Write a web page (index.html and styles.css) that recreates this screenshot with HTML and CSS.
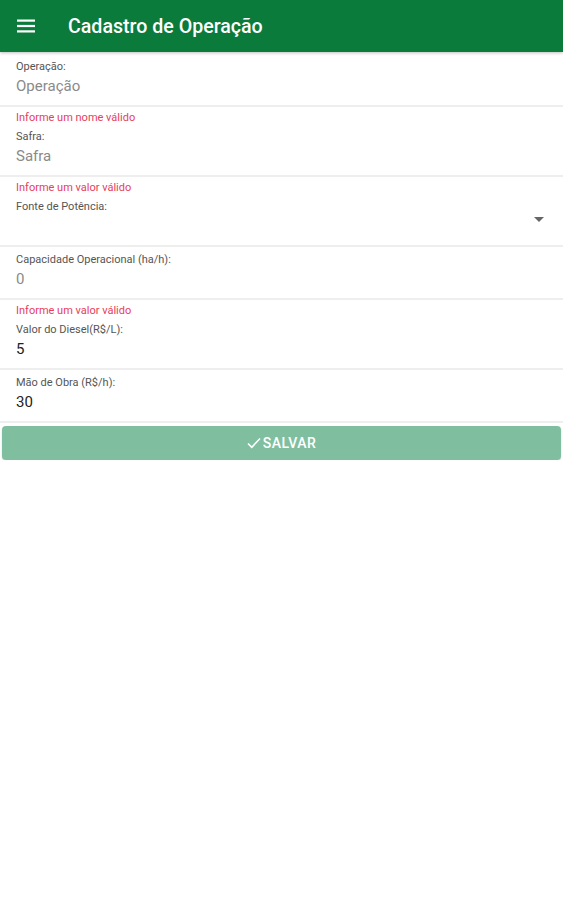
FILE: index.html
```html
<!DOCTYPE html>
<html lang="pt-BR">
<head>
<meta charset="utf-8">
<title>Cadastro de Operação</title>
<link rel="stylesheet" href="styles.css">
</head>
<body>
<header class="toolbar">
  <svg class="menu" width="18" height="14" viewBox="0 0 18 14" aria-hidden="true">
    <rect x="0" y="0.5" width="18" height="2.2" fill="#fff"/>
    <rect x="0" y="5.9" width="18" height="2.2" fill="#fff"/>
    <rect x="0" y="11.3" width="18" height="2.2" fill="#fff"/>
  </svg>
  <h1 class="title">Cadastro de Operação</h1>
</header>
<main class="form">
  <div class="field">
    <div class="label">Operação:</div>
    <div class="value placeholder">Operação</div>
  </div>
  <div class="field">
    <div class="error">Informe um nome válido</div>
    <div class="label">Safra:</div>
    <div class="value placeholder">Safra</div>
  </div>
  <div class="field">
    <div class="error">Informe um valor válido</div>
    <div class="label">Fonte de Potência:</div>
    <div class="value select"><span></span><span class="arrow"></span></div>
  </div>
  <div class="field">
    <div class="label">Capacidade Operacional (ha/h):</div>
    <div class="value placeholder">0</div>
  </div>
  <div class="field">
    <div class="error">Informe um valor válido</div>
    <div class="label">Valor do Diesel(R$/L):</div>
    <div class="value">5</div>
  </div>
  <div class="field">
    <div class="label">Mão de Obra (R$/h):</div>
    <div class="value">30</div>
  </div>
  <button class="save" type="button">
    <svg width="14" height="12" viewBox="0 0 14 12" aria-hidden="true"><path d="M1 6.5 L4.8 10.3 L13 1.5" fill="none" stroke="#fff" stroke-width="1.6"/></svg>
    <span>SALVAR</span>
  </button>
</main>
</body>
</html>
```
FILE: styles.css
```css
* { box-sizing: border-box; }
html, body { margin: 0; padding: 0; background: #fff; }
body { font-family: Roboto, "Noto Sans", Arial, sans-serif; width: 563px; }

.toolbar {
  height: 52px;
  background: #0a7b3b;
  display: flex;
  align-items: center;
  padding-left: 17px;
  box-shadow: 0 1px 3px rgba(0,0,0,0.25);
  position: relative;
  z-index: 1;
}
.menu { display: block; }
.title {
  margin: 0 0 0 33px;
  color: #fff;
  font-size: 19.6px;
  font-weight: 500;
  letter-spacing: 0;
}

.form { display: flex; flex-direction: column; padding-top: 2px; }

.field {
  padding: 5px 16px 8px;
  border-bottom: 2px solid #eeeeee;
  display: flex;
  flex-direction: column;
}
.error {
  color: #e8405c;
  font-size: 11px;
  line-height: 12px;
  margin-bottom: 5px;
}
.label {
  color: #555;
  font-size: 11px;
  line-height: 14px;
  margin-top: 1px;
}
.value {
  margin-top: 1px;
  height: 22px;
  line-height: 22px;
  font-size: 15px;
  color: #222;
}
.placeholder { color: #8a8a8a; }
.select { display: flex; justify-content: space-between; align-items: flex-start; padding-right: 3px; }
.arrow {
  width: 0; height: 0;
  border-left: 5px solid transparent;
  border-right: 5px solid transparent;
  border-top: 5px solid #666;
  margin-top: 2px;
}

.save {
  margin: 3px 2px 0;
  height: 34px;
  border: none;
  border-radius: 4px;
  background: #7fbf9f;
  color: #fff;
  font-family: inherit;
  font-size: 14px;
  letter-spacing: 0.5px;
  font-weight: 500;
  display: flex;
  align-items: center;
  justify-content: center;
  gap: 2px;
  box-shadow: 0 1px 2px rgba(0,0,0,0.15);
  padding: 0;
}
.save svg { margin-top: -1px; }
```
